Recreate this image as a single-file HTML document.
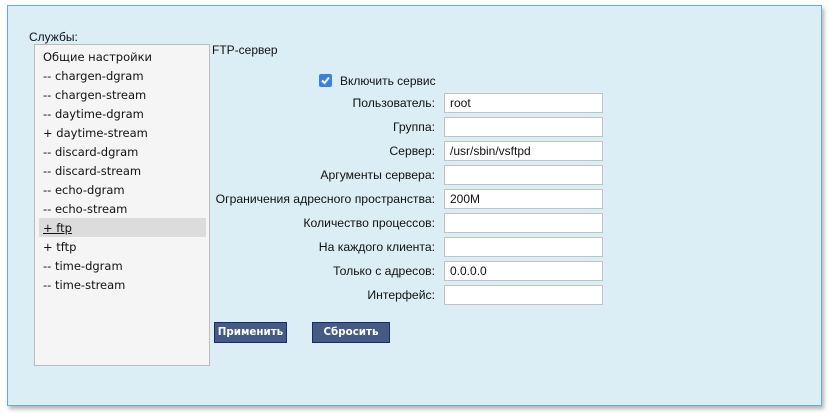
<!DOCTYPE html>
<html><head><meta charset="utf-8"><style>
body{margin:0;width:835px;height:420px;background:#fff;font-family:"Liberation Sans","DejaVu Sans",sans-serif;font-size:12px;color:#111;position:relative;overflow:hidden}
.panel{position:absolute;left:7px;top:5px;width:813px;height:399px;background:#dbedf5;border:1px solid #6aaccb;box-shadow:2px 3px 4px rgba(0,0,0,.3)}
.a{position:absolute;white-space:nowrap}
.list{position:absolute;left:34px;top:44px;width:176px;height:322px;background:#f5f5f5;border:1px solid #bbb;box-sizing:border-box}
.it{position:absolute;left:8px;font-family:"DejaVu Sans",sans-serif;font-size:11.5px}
.sel{position:absolute;left:4px;top:173px;width:167px;height:19px;background:#dcdcdc}
.lb{position:absolute;right:400px;text-align:right;white-space:nowrap;font-size:12.2px}
.in{position:absolute;left:444px;width:159px;height:20px;background:#fff;border:1px solid #c2c2c2;box-sizing:border-box;padding:2px 5px;font-size:12px}
.btn{position:absolute;top:322px;height:21px;background:#465a86;border:1px solid #1c2a66;box-sizing:border-box;color:#fff;font-weight:bold;font-family:"DejaVu Sans",sans-serif;font-size:10.3px;text-align:center;line-height:19px;white-space:nowrap}
</style></head><body>
<div class="panel"></div>
<div class="a" style="left:29px;top:30px">Службы:</div>
<div class="list">
<div class="sel"></div>
<div class="it" style="top:5px">Общие настройки</div>
<div class="it" style="top:24px">-- chargen-dgram</div>
<div class="it" style="top:43px">-- chargen-stream</div>
<div class="it" style="top:62px">-- daytime-dgram</div>
<div class="it" style="top:81px">+ daytime-stream</div>
<div class="it" style="top:100px">-- discard-dgram</div>
<div class="it" style="top:119px">-- discard-stream</div>
<div class="it" style="top:138px">-- echo-dgram</div>
<div class="it" style="top:157px">-- echo-stream</div>
<div class="it" style="top:176px;text-decoration:underline">+ ftp</div>
<div class="it" style="top:195px">+ tftp</div>
<div class="it" style="top:214px">-- time-dgram</div>
<div class="it" style="top:233px">-- time-stream</div>
</div>
<div class="a" style="left:212px;top:43px">FTP-сервер</div>
<div class="a" style="left:319px;top:74px;width:13px;height:13px;background:#3d7fe0;border-radius:2px"><svg width="13" height="13"><path d="M3 6.5l2.5 2.5L10 3.5" stroke="#fff" stroke-width="2" fill="none"/></svg></div>
<div class="a" style="left:340px;top:74px">Включить сервис</div>
<div class="lb" style="top:96px">Пользователь:</div><div class="in" style="top:93px">root</div>
<div class="lb" style="top:120px">Группа:</div><div class="in" style="top:117px"></div>
<div class="lb" style="top:144px">Сервер:</div><div class="in" style="top:141px">/usr/sbin/vsftpd</div>
<div class="lb" style="top:168px">Аргументы сервера:</div><div class="in" style="top:165px"></div>
<div class="lb" style="top:192px">Ограничения адресного пространства:</div><div class="in" style="top:189px">200M</div>
<div class="lb" style="top:216px">Количество процессов:</div><div class="in" style="top:213px"></div>
<div class="lb" style="top:240px">На каждого клиента:</div><div class="in" style="top:237px"></div>
<div class="lb" style="top:264px">Только с адресов:</div><div class="in" style="top:261px">0.0.0.0</div>
<div class="lb" style="top:288px">Интерфейс:</div><div class="in" style="top:285px"></div>
<div class="btn" style="left:214px;width:73px">Применить</div>
<div class="btn" style="left:312px;width:78px">Сбросить</div>
</body></html>
